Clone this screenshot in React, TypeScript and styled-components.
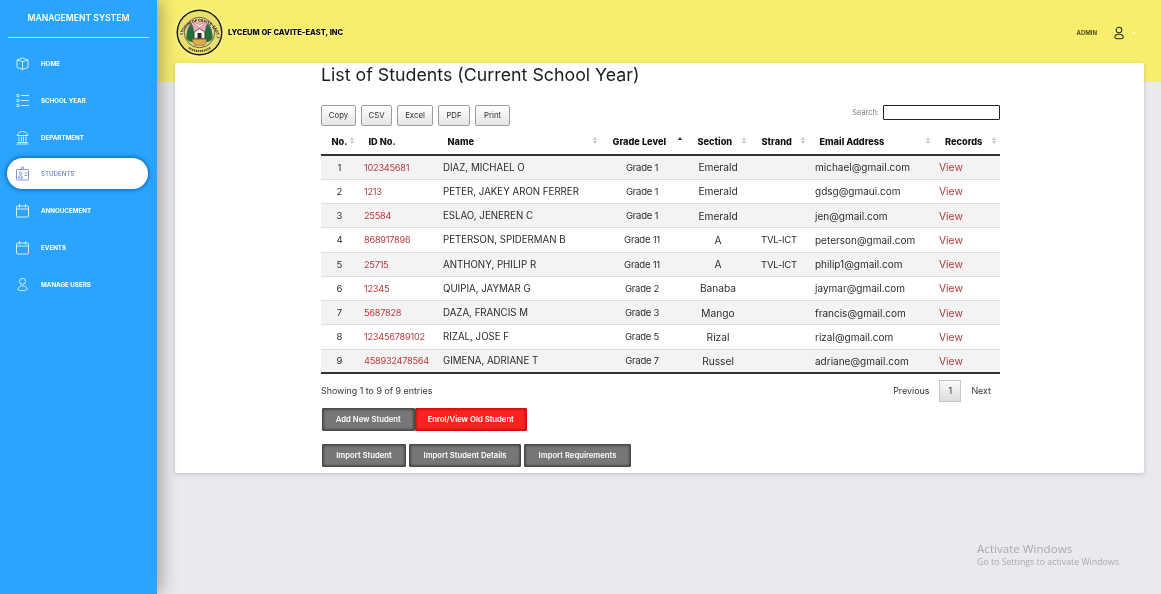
import React from 'react'
import styled, { createGlobalStyle } from 'styled-components';

const Global = createGlobalStyle`
  html, body {
    margin: 0;
    padding: 0;
    height: 100%;
    overflow: hidden;
    background: #e9eaef;
    font-family: "Inter", "Liberation Sans", sans-serif;
  }
`;

const Page = styled.div`
  display: flex;
  width: 1161px;
  height: 594px;
  overflow: hidden;
  background: #e9eaef;
  filter: blur(.35px);
`;

const Sidebar = styled.aside`
  position: relative;
  z-index: 2;
  width: 157px;
  flex-shrink: 0;
  padding: 0 8px;
  box-sizing: border-box;
  background: #2ba4fe;
  box-shadow: 4px 0 16px rgba(60, 60, 70, .42);
`;

const Brand = styled.div`
  height: 26px;
  padding-top: 11px;
  margin-bottom: 10px;
  border-bottom: 1px solid #b5dfff;
  color: #fff;
  font-size: 8.6px;
  font-weight: 600;
  line-height: 14px;
  text-align: center;
`;

const NavItem = styled.div<{ active?: boolean }>`
  display: flex;
  align-items: center;
  gap: 11px;
  height: 31px;
  margin: 0 1px 5.75px -1px;
  padding-left: 8px;
  border-radius: 16px;
  color: ${props => props.active ? '#5f7fcb' : '#fff'};
  background: ${props => props.active ? '#fff' : 'transparent'};
  box-shadow: ${props => props.active ? '0 0 4px 1px #0b66ad' : 'none'};
  font-size: 6.2px;
  font-weight: ${props => props.active ? 500 : 700};
`;

const NavIcon = styled.svg`
  width: 15px;
  height: 15px;
  flex-shrink: 0;
  fill: none;
  stroke: currentColor;
  stroke-width: 1;
  opacity: .8;
`;

const Main = styled.div`
  flex: 1;
  display: flex;
  flex-direction: column;
  min-width: 0;
`;

const Header = styled.header`
  display: flex;
  align-items: flex-start;
  justify-content: space-between;
  height: 82px;
  flex-shrink: 0;
  padding: 9px 26px 0 19px;
  box-sizing: border-box;
  background: #f8ee6e;
`;

const School = styled.div`
  display: flex;
  align-items: center;
  gap: 5px;
  color: #0a0a0a;
  font-size: 7.6px;
  font-weight: 800;
  text-shadow: 0 0 2px #fffcc0;
`;

const Seal = styled.svg`
  width: 47px;
  height: 47px;
  overflow: visible;
  filter: drop-shadow(0 0 2px #fff9b0);
`;

const SealText = styled.text`
  fill: #2a2018;
  font-family: "Inter", sans-serif;
  font-size: 4px;
  font-weight: 800;
`;

const Admin = styled.div`
  display: flex;
  align-items: center;
  gap: 15px;
  height: 47px;
  color: #3c3a10;
  font-size: 6px;
  font-weight: 600;
`;

const AdminIcon = styled.svg`
  width: 14px;
  height: 14px;
  fill: none;
  stroke: #2a2a10;
  stroke-width: 1.1;
`;

const AdminDot = styled.span`
  width: 2px;
  height: 2px;
  margin-left: -8px;
  border-radius: 50%;
  background: #fffde0;
`;

const Card = styled.section`
  width: 969px;
  height: 410px;
  margin: -19px 0 0 18px;
  padding: 0 144px 0 146px;
  box-sizing: border-box;
  background: #fff;
  border-radius: 2px;
  box-shadow: 0 1px 4px rgba(90, 90, 100, .3);
`;

const Title = styled.h1`
  margin: 0;
  height: 41px;
  color: #1c1c1c;
  font-size: 17.8px;
  font-weight: 400;
  line-height: 24px;
`;

const Toolbar = styled.div`
  display: flex;
  align-items: center;
  justify-content: space-between;
  height: 22px;
`;

const ExportButtons = styled.div`
  display: flex;
  gap: 5px;
`;

const GreyButton = styled.button<{ w: number }>`
  width: ${props => props.w}px;
  height: 21px;
  padding: 0;
  border: 1px solid #9d9d9d;
  border-radius: 2px;
  background: linear-gradient(#fff, #e4e4e4);
  color: #333;
  font-family: inherit;
  font-size: 7.8px;
`;

const Search = styled.label`
  display: flex;
  align-items: center;
  gap: 4px;
  margin-top: -6px;
  color: #777;
  font-size: 7.4px;
`;

const SearchInput = styled.div`
  width: 117px;
  height: 15px;
  box-sizing: border-box;
  border: 1.5px solid #222;
  border-radius: 1px;
  background: #fff;
`;

const Table = styled.table`
  width: 679px;
  table-layout: fixed;
  border-collapse: collapse;
  margin-top: 4px;
`;

const Th = styled.th<{ w: number; pad: number }>`
  position: relative;
  width: ${props => props.w}px;
  height: 25px;
  padding: 0 0 2px ${props => props.pad}px;
  border-bottom: 2px solid #333;
  box-sizing: border-box;
  color: #111;
  font-size: 9.2px;
  font-weight: 800;
  text-align: left;
  white-space: nowrap;
`;

const Sort = styled.span<{ right: number; sorted?: boolean }>`
  position: absolute;
  right: ${props => props.right}px;
  top: 7px;
  display: flex;
  flex-direction: column;
  gap: 1px;
  &::before, &::after {
    content: '';
    width: 0;
    height: 0;
    border-left: 2px solid transparent;
    border-right: 2px solid transparent;
  }
  &::before {
    border-bottom: 3px solid ${props => props.sorted ? '#1a1a70' : '#c4c4c4'};
  }
  &::after {
    border-top: 3px solid ${props => props.sorted ? 'transparent' : '#c4c4c4'};
  }
`;

const Row = styled.tr<{ odd: boolean }>`
  height: 24.25px;
  background: ${props => props.odd ? '#f3f3f3' : '#fff'};
`;

const Td = styled.td<{ size: number; center?: boolean; shift?: number; tight?: boolean }>`
  padding: 0 ${props => props.shift || 0}px 0 ${props => props.center ? 0 : 6}px;
  border-top: 1px solid #dedede;
  color: #2b2b2b;
  font-size: ${props => props.size}px;
  letter-spacing: ${props => props.tight ? '-.25px' : 'normal'};
  text-align: ${props => props.center ? 'center' : 'left'};
  white-space: nowrap;
  tr:first-child > & { border-top: 0; }
`;

const LinkText = styled.span`
  color: #b83a3a;
`;

const TableBody = styled.tbody`
  border-bottom: 2px solid #333;
`;

const Footer = styled.div`
  display: flex;
  align-items: center;
  justify-content: space-between;
  height: 33px;
  color: #333;
  font-size: 8.9px;
`;

const Pager = styled.div`
  display: flex;
  align-items: center;
  gap: 10px;
  padding-right: 9px;
`;

const PageNo = styled.div`
  width: 22px;
  height: 22px;
  display: flex;
  align-items: center;
  justify-content: center;
  border: 1px solid #c4c4c4;
  box-sizing: border-box;
  background: linear-gradient(#fafafa, #dcdcdc);
`;

const ActionRow = styled.div`
  display: flex;
  gap: 3px;
  margin-left: 1px;
`;

const Segmented = styled.div`
  display: flex;
  margin: 1px 0 13px 1px;
  width: 205px;
`;

const ActionButton = styled.button<{ w: number; red?: boolean }>`
  width: ${props => props.w}px;
  height: 23px;
  padding: 0;
  border: 1px solid ${props => props.red ? '#d40f0f' : '#4a4a4a'};
  border-radius: 1px;
  background: ${props => props.red ? '#fc2222' : '#777'};
  box-shadow: inset 0 0 3px ${props => props.red ? '#900' : '#222'};
  color: #fff;
  font-family: inherit;
  font-size: 7.7px;
  font-weight: 600;
`;

const Watermark = styled.div`
  position: absolute;
  left: 977px;
  top: 541px;
  color: #a9aab0;
  font-family: "Open Sans", sans-serif;
  font-size: 8.8px;
`;

const WatermarkTitle = styled.div`
  font-size: 11.6px;
  line-height: 15px;
`;

const icons = {
  box: <><path d="M2 4 7.500 2 13 4v7.500L7.500 13.500 2 11.500z" /><path d="M2 4 7.500 5.500 13 4M7.500 5.500v8" /></>,
  list: <><circle cx="3" cy="2.500" r="1.300" /><circle cx="3" cy="7.500" r="1.300" /><circle cx="3" cy="12.500" r="1.300" /><path d="M6 2.500h8M6 7.500h8M6 12.500h8" /></>,
  bank: <><path d="M2 5.500C3 2.500 5 1.500 7.500 1.500s4.500 1 5.500 4zM2 5.500h11M2.500 12.500h10M1.500 14h12M4 6.500v5M6.500 6.500v5M8.500 6.500v5M11 6.500v5" /></>,
  badge: <><rect x="1.500" y="3.500" width="12" height="10.500" rx=".8" /><circle cx="7.500" cy="2" r="1.200" /><circle cx="5.500" cy="7.300" r="1.300" /><path d="M3.300 12c0-3 4.400-3 4.400 0zM9.500 7h2.500M9.500 9.500h2.500" /></>,
  calendar: <><rect x="1.500" y="3" width="12" height="11" rx=".8" /><path d="M1.500 6h12M4.500 1v3.500M10.500 1v3.500" /></>,
  user: <><circle cx="7.500" cy="4.300" r="3" /><path d="M3 12.300c0-4.600 9-4.600 9 0 0 1.800-9 1.800-9 0z" /></>,
};

const navItems = [
  { label: 'HOME', icon: icons.box },
  { label: 'SCHOOL YEAR', icon: icons.list },
  { label: 'DEPARTMENT', icon: icons.bank },
  { label: 'STUDENTS', icon: icons.badge, active: true },
  { label: 'ANNOUCEMENT', icon: icons.calendar },
  { label: 'EVENTS', icon: icons.calendar },
  { label: 'MANAGE USERS', icon: icons.user },
];

const columns = [
  { label: 'No.', w: 37, pad: 10.5, sort: 4 },
  { label: 'ID No.', w: 79, pad: 10.5 },
  { label: 'Name', w: 168, pad: 10.5, sort: 8 },
  { label: 'Grade Level', w: 86, pad: 7.5, sort: 9, sorted: true },
  { label: 'Section', w: 64, pad: 6.5, sort: 9 },
  { label: 'Strand', w: 54, pad: 6.5, sort: 4 },
  { label: 'Email Address', w: 124, pad: 10.5, sort: 3 },
  { label: 'Records', w: 67, pad: 12, sort: 4 },
];

const students = [
  ['102345681', 'DIAZ, MICHAEL O', 'Grade 1', 'Emerald', '', 'michael@gmail.com'],
  ['1213', 'PETER, JAKEY ARON FERRER', 'Grade 1', 'Emerald', '', 'gdsg@gmaui.com'],
  ['25584', 'ESLAO, JENEREN C', 'Grade 1', 'Emerald', '', 'jen@gmail.com'],
  ['868917896', 'PETERSON, SPIDERMAN B', 'Grade 11', 'A', 'TVL-ICT', 'peterson@gmail.com'],
  ['25715', 'ANTHONY, PHILIP R', 'Grade 11', 'A', 'TVL-ICT', 'philip1@gmail.com'],
  ['12345', 'QUIPIA, JAYMAR G', 'Grade 2', 'Banaba', '', 'jaymar@gmail.com'],
  ['5687828', 'DAZA, FRANCIS M', 'Grade 3', 'Mango', '', 'francis@gmail.com'],
  ['123456789102', 'RIZAL, JOSE F', 'Grade 5', 'Rizal', '', 'rizal@gmail.com'],
  ['458932478564', 'GIMENA, ADRIANE T', 'Grade 7', 'Russel', '', 'adriane@gmail.com'],
];

const SealLogo = () => <Seal viewBox="0 0 48 48">
  <defs>
    <path id="sealRing" d="M4.500 31A19.500 19.500 0 1 1 43.500 31" />
  </defs>
  <circle cx="24" cy="24" r="23.500" fill="#1c1c14" />
  <circle cx="24" cy="24" r="22" fill="#e9df6c" />
  <circle cx="24" cy="24" r="15.500" fill="#ecd98a" stroke="#2a2a18" strokeWidth=".7" />
  <path d="M11 20a14 14 0 0 1 26 0v6H11z" fill="#f3a5c8" />
  <path d="M10.500 30c0-7 2-12 5-16 3 5 4 12 2 20 -3 0-5-2-7-4zM37.500 30c0-7-2-12-5-16-3 5-4 12-2 20 3 0 5-2 7-4z" fill="#22703a" />
  <path d="M16 13l8 3 8-3-8 6z" fill="#f6efdc" stroke="#b06a30" strokeWidth=".5" />
  <path d="M18.500 30v-6.500l5.500-3.500 5.500 3.500v6.500z" fill="#f8f3e6" stroke="#222" strokeWidth=".7" />
  <rect x="22" y="24.500" width="4" height="5.500" fill="#26262a" />
  <path d="M16 31h16l-3 6H19z" fill="#dcae4c" stroke="#3a2a10" strokeWidth=".4" />
  <SealText dy="1.500"><textPath href="#sealRing" startOffset="5">LYCEUM OF CAVITE-EAST, INC</textPath></SealText>
  <path d="M13 39.500a19 19 0 0 0 22 0" fill="none" stroke="#4a3a20" strokeWidth="2" strokeDasharray="1.200 .8" />
</Seal>;

export default function App() {
  return <Page>
    <Global />
    <Sidebar>
      <Brand>MANAGEMENT SYSTEM</Brand>
      {navItems.map(item => <NavItem key={item.label} active={item.active}>
        <NavIcon viewBox="0 0 15 15">{item.icon}</NavIcon>
        {item.label}
      </NavItem>)}
    </Sidebar>
    <Main>
      <Header>
        <School><SealLogo />LYCEUM OF CAVITE-EAST, INC</School>
        <Admin>
          ADMIN
          <AdminIcon viewBox="0 0 15 15">{icons.user}</AdminIcon>
          <AdminDot />
        </Admin>
      </Header>
      <Card>
        <Title>List of Students (Current School Year)</Title>
        <Toolbar>
          <ExportButtons>
            <GreyButton w={35}>Copy</GreyButton>
            <GreyButton w={31}>CSV</GreyButton>
            <GreyButton w={36}>Excel</GreyButton>
            <GreyButton w={32}>PDF</GreyButton>
            <GreyButton w={35}>Print</GreyButton>
          </ExportButtons>
          <Search>Search: <SearchInput /></Search>
        </Toolbar>
        <Table>
          <thead>
            <tr>
              {columns.map(col => <Th key={col.label} w={col.w} pad={col.pad}>
                {col.label}
                {col.sort !== undefined && <Sort right={col.sort} sorted={col.sorted} />}
              </Th>)}
            </tr>
          </thead>
          <TableBody>
            {students.map((s, i) => <Row key={s[0]} odd={i % 2 === 0}>
              <Td size={9.5} center>{i + 1}</Td>
              <Td size={9.2} tight><LinkText>{s[0]}</LinkText></Td>
              <Td size={9.7}>{s[1]}</Td>
              <Td size={9.5} center shift={12} tight>{s[2]}</Td>
              <Td size={10.2} center shift={10}>{s[3]}</Td>
              <Td size={9.5} center shift={6} tight>{s[4]}</Td>
              <Td size={10}>{s[5]}</Td>
              <Td size={10.3}><LinkText>View</LinkText></Td>
            </Row>)}
          </TableBody>
        </Table>
        <Footer>
          <span>Showing 1 to 9 of 9 entries</span>
          <Pager>
            <span>Previous</span>
            <PageNo>1</PageNo>
            <span>Next</span>
          </Pager>
        </Footer>
        <Segmented>
          <ActionButton w={93}>Add New Student</ActionButton>
          <ActionButton w={113} red>Enrol/View Old Student</ActionButton>
        </Segmented>
        <ActionRow>
          <ActionButton w={84}>Import Student</ActionButton>
          <ActionButton w={112}>Import Student Details</ActionButton>
          <ActionButton w={107}>Import Requirements</ActionButton>
        </ActionRow>
      </Card>
    </Main>
    <Watermark>
      <WatermarkTitle>Activate Windows</WatermarkTitle>
      Go to Settings to activate Windows.
    </Watermark>
  </Page>;
}
